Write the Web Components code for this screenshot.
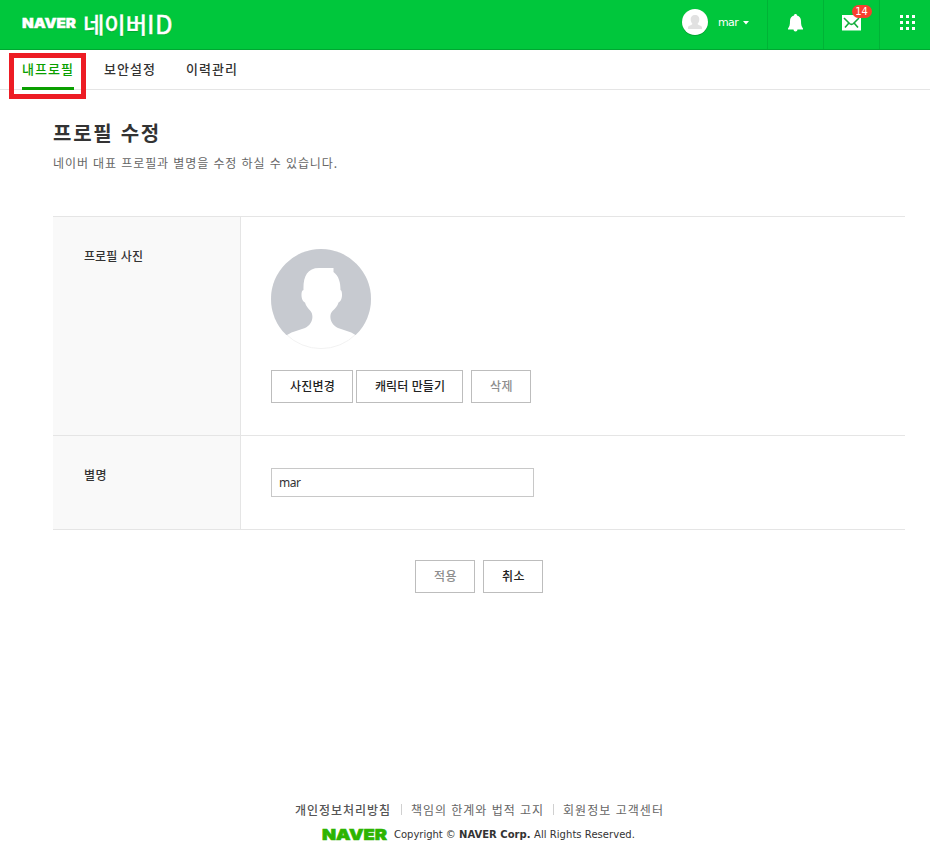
<!DOCTYPE html>
<html lang="ko">
<head>
<meta charset="utf-8">
<title>네이버ID</title>
<style>
body{margin:0;background:#fff;font-family:"Noto Sans CJK KR",sans-serif;color:#333}
</style>
</head>
<body>
<profile-page></profile-page>
<script>
function define(name, html, setup) {
  customElements.define(name, class extends HTMLElement {
    connectedCallback() {
      if (this.shadowRoot) return;
      this.attachShadow({ mode: 'open' }).innerHTML = html;
      if (setup) setup(this, this.shadowRoot);
    }
  });
}

/* One line of text that fills a given width, by letter spacing or, with "stretch", by wider glyphs. */
define('fit-text', `<style>:host{display:inline-block;white-space:nowrap}span{display:inline-block;white-space:pre;transform-origin:0 50%}</style><span></span>`, (host, root) => {
  const s = root.querySelector('span');
  s.textContent = host.getAttribute('text');
  const w = +host.getAttribute('w');
  const n = [...s.textContent].length;
  const natural = s.getBoundingClientRect().width;
  if (host.hasAttribute('stretch')) s.style.transform = 'scaleX(' + w / natural + ')';
  else s.style.letterSpacing = ((w - natural) / n) + 'px';
  host.style.width = w + 'px';
});

define('service-logo', `<style>
:host{display:flex;align-items:center;color:#fff;height:49px}
.n{font:900 13.500px/20px Inter,sans-serif;-webkit-text-stroke:.4px #fff;text-shadow:0 1px 1px #00a52f;margin:-4px 7px 0 0}
.k{font:500 22px/30px "Noto Sans CJK KR",sans-serif;margin-top:-4px;-webkit-text-stroke:.3px #fff;text-shadow:0 1px 1px #00a52f}
.i{font:400 25.500px/30px "Noto Sans CJK KR",sans-serif;margin-top:-4px;-webkit-text-stroke:.5px #fff;text-shadow:0 1px 1px #00a52f}
</style><fit-text stretch class="n" text="NAVER" w="54"></fit-text><fit-text stretch class="k" text="네이버" w="64"></fit-text><fit-text class="i" text="ID" w="26"></fit-text>`);

define('header-cell', `<style>
:host{display:flex;width:55px;height:49px;border-left:1px solid #00b336;align-items:center;justify-content:center;position:relative}
</style><slot></slot>`);

define('top-header', `<style>
:host{display:flex;height:49px;background:#00c73c;border-bottom:1px solid #00a732;padding-left:22px;box-sizing:content-box}
.user{margin-left:auto;display:flex;align-items:center;padding-right:18px;color:#fff;font:11px/16px "DejaVu Sans",sans-serif;height:44px}
.user svg:first-child{margin-right:9px}
.user fit-text{margin-top:2px}
.caret{margin:1px 0 0 5px}
svg{display:block}
.badge{position:absolute;left:28px;top:5px;width:20px;height:13px;border-radius:7px;background:#f93f2f;color:#fff;font:10px/13px "DejaVu Sans",sans-serif;text-align:center;text-indent:-1px}
</style>
<service-logo></service-logo>
<div class="user">
<svg width="28" height="28" viewBox="0 0 28 28"><circle cx="14" cy="14.6" r="13.2" fill="#009e2e"/><circle cx="14" cy="14" r="13" fill="#fff"/><path d="M14 7c3 0 4.6 2 4.3 5-.2 2-1 3-1.8 3.8.2 1.7 4.5 1.3 4.5 4V21H7v-1.200c0-2.700 4.300-2.300 4.500-4-.8-.8-1.600-1.800-1.800-3.800C9.400 9 11 7 14 7z" fill="#e1e1e1"/></svg>
<fit-text text="mar" w="20"></fit-text>
<svg class="caret" width="6" height="4" viewBox="0 0 6 4"><path d="M0 0h6L3 3.500z" fill="#fff"/></svg></div>
<header-cell><svg width="17" height="20" viewBox="0 0 17 20" style="margin-top:-3px"><path d="M8.500 1c1 0 1.500.6 1.500 1.500 2.700.7 4 2.800 4 5.500 0 4 .5 5.500 2 7.500v1H1v-1C2.500 13.500 3 12 3 8c0-2.700 1.300-4.800 4-5.500C7 1.600 7.500 1 8.500 1zM6.500 16.500h4q0 2-2 2t-2-2z" fill="#fff"/></svg></header-cell>
<header-cell><svg width="19" height="16" viewBox="0 0 19 16" style="margin-top:-4px"><path d="M0 0h19v15.500H0z" fill="#fff"/><path d="M2 3l5.500 5.500q2 1.800 4 0L17 3M3 12.500l3.500-4M16 12.500l-3.500-4" fill="none" stroke="#13ad3b" stroke-width="1.600"/></svg><span class="badge">14</span></header-cell>
<header-cell style="width:50px"><svg width="15" height="15" viewBox="0 0 15 15" style="margin:-4px 0 0 5px"><path d="M0 0h3v3H0zM6 0h3v3H6zM12 0h3v3h-3zM0 6h3v3H0zM6 6h3v3H6zM12 6h3v3h-3zM0 12h3v3H0zM6 12h3v3H6zM12 12h3v3h-3z" fill="#fff"/></svg></header-cell>`);

define('nav-tab', `<style>
:host{display:block;width:52px;height:37px;font-size:13px;line-height:38px;font-weight:500;color:#333}
:host([active]){color:#0a9f00;border-bottom:3px solid #0a9f00}
</style><slot></slot>`);

define('nav-tabs', `<style>
:host{display:flex;gap:30px;height:39px;border-bottom:1px solid #e5e5e5;padding-left:22px;position:relative}
.mark{position:absolute;left:9px;top:3px;width:67px;height:36px;border:5px solid #ed1c24}
</style>
<nav-tab active><fit-text text="내프로필" w="52"></fit-text></nav-tab>
<nav-tab><fit-text text="보안설정" w="52"></fit-text></nav-tab>
<nav-tab><fit-text text="이력관리" w="52"></fit-text></nav-tab>
<div class="mark"></div>`);

define('line-button', `<style>
:host{display:flex;align-items:center;justify-content:center;box-sizing:border-box;height:33px;border:1px solid #bdbdbd;background:#fff;font-size:12px;line-height:18px;font-weight:500;color:#222;padding:0 0 1px 1px}
:host([dim]){color:#8d8d8d}
</style><slot></slot>`);

define('form-row', `<style>
:host{display:flex;border-bottom:1px solid #e5e5e5}
.label{width:156px;padding:30px 0 0 31px;background:#f9f9f9;border-right:1px solid #e5e5e5;font-size:12px;line-height:18px;font-weight:500}
.body{flex:1;padding:32px 0 32px 30px}
</style><div class="label"><slot name="label"></slot></div><div class="body"><slot></slot></div>`);

define('user-photo', `<style>:host,svg{display:block}</style>
<svg width="100" height="100" viewBox="0 0 100 100"><defs><clipPath id="c"><circle cx="50" cy="50" r="50"/></clipPath></defs>
<circle cx="50" cy="50" r="49.600" fill="#fff" stroke="#efefef" stroke-width=".8"/>
<g clip-path="url(#c)"><path d="M0 0H100V86H84.500C79 82 73 81.500 67 79C59 75.500 57.500 66 61.500 62C64.500 59 66.500 57 67.500 53.500C70 52.500 71 49 71 46C71 43 70.500 41.500 69.500 41C69.500 34 68 27 62.500 23V19H48C36 19 32 28 32.500 41C31 41.500 30.500 43 30.500 46C30.500 49 31.500 52.500 34 53.500C35 57 37 59 39.500 62C43 66 42 75.500 34 79C28 81.500 22 82 16 86H0Z" fill="#c7cad0"/></g></svg>`);

define('text-field', `<style>:host{display:block}
input{display:block;box-sizing:border-box;width:263px;height:29px;border:1px solid #c8c8c8;padding:0 7px 1px;margin:0;border-radius:0;outline:0;background:#fff;color:#333;font:12px "Noto Sans",sans-serif;letter-spacing:-.5px}</style><input type="text">`, (host, root) => {
  root.querySelector('input').value = host.getAttribute('value');
});

define('profile-form', `<style>
:host{display:block;border-top:1px solid #e5e5e5;width:852px}
.btns{display:flex;margin-top:21px}
</style>
<form-row><fit-text slot="label" text="프로필 사진" w="59"></fit-text>
<user-photo></user-photo>
<div class="btns"><line-button style="width:82px;margin-right:3px"><fit-text text="사진변경" w="45"></fit-text></line-button><line-button style="width:107px;margin-right:8px"><fit-text text="캐릭터 만들기" w="70"></fit-text></line-button><line-button dim style="width:60px"><fit-text text="삭제" w="23"></fit-text></line-button></div></form-row>
<form-row><fit-text slot="label" text="별명" w="23"></fit-text><text-field value="mar"></text-field></form-row>`);

define('page-footer', `<style>
:host{display:block;color:#666;font-size:12px;line-height:18px}
.links{display:flex;align-items:center;padding-left:295px}
i{width:1px;height:11px;background:#d0d0d0;margin:-1px 9px 0 10px}
i+fit-text+i{margin-left:9px}
.b{font-weight:500;color:#555}
.copy{display:flex;align-items:center;padding-left:322px;margin-top:7px;height:18px;color:#333;font:10px/18px "DejaVu Sans",sans-serif}
.logo{font:900 15px/18px Inter,sans-serif;color:#2db400;-webkit-text-stroke:.6px #2db400;margin-right:7px}
</style>
<div class="links"><fit-text class="b" text="개인정보처리방침" w="96"></fit-text><i></i><fit-text text="책임의 한계와 법적 고지" w="133"></fit-text><i></i><fit-text text="회원정보 고객센터" w="101"></fit-text></div>
<div class="copy"><fit-text stretch class="logo" text="NAVER" w="65"></fit-text><fit-text text="Copyright © " w="65"></fit-text><fit-text style="font-weight:bold" text="NAVER Corp. " w="75"></fit-text><fit-text text="All Rights Reserved." w="101"></fit-text></div>`);

define('profile-page', `<style>
:host{display:flex;flex-direction:column;width:930px;height:844px;overflow:hidden}
main{padding:27px 25px 0 53px}
h1{margin:0;font-size:20px;line-height:32px;font-weight:600;color:#333}
p{margin:4px 0 43px;font-size:12px;line-height:20px;color:#666}
h1 fit-text,p fit-text{display:block}
.actions{display:flex;gap:8px;padding:30px 0 0 362px}
page-footer{margin-top:auto}
</style>
<top-header></top-header><nav-tabs></nav-tabs>
<main><h1><fit-text text="프로필 수정" w="108"></fit-text></h1>
<p><fit-text text="네이버 대표 프로필과 별명을 수정 하실 수 있습니다." w="285"></fit-text></p>
<profile-form></profile-form>
<div class="actions"><line-button dim style="width:60px"><fit-text text="적용" w="23"></fit-text></line-button><line-button style="width:60px"><fit-text text="취소" w="23"></fit-text></line-button></div></main>
<page-footer></page-footer>`);
</script>
</body>
</html>
